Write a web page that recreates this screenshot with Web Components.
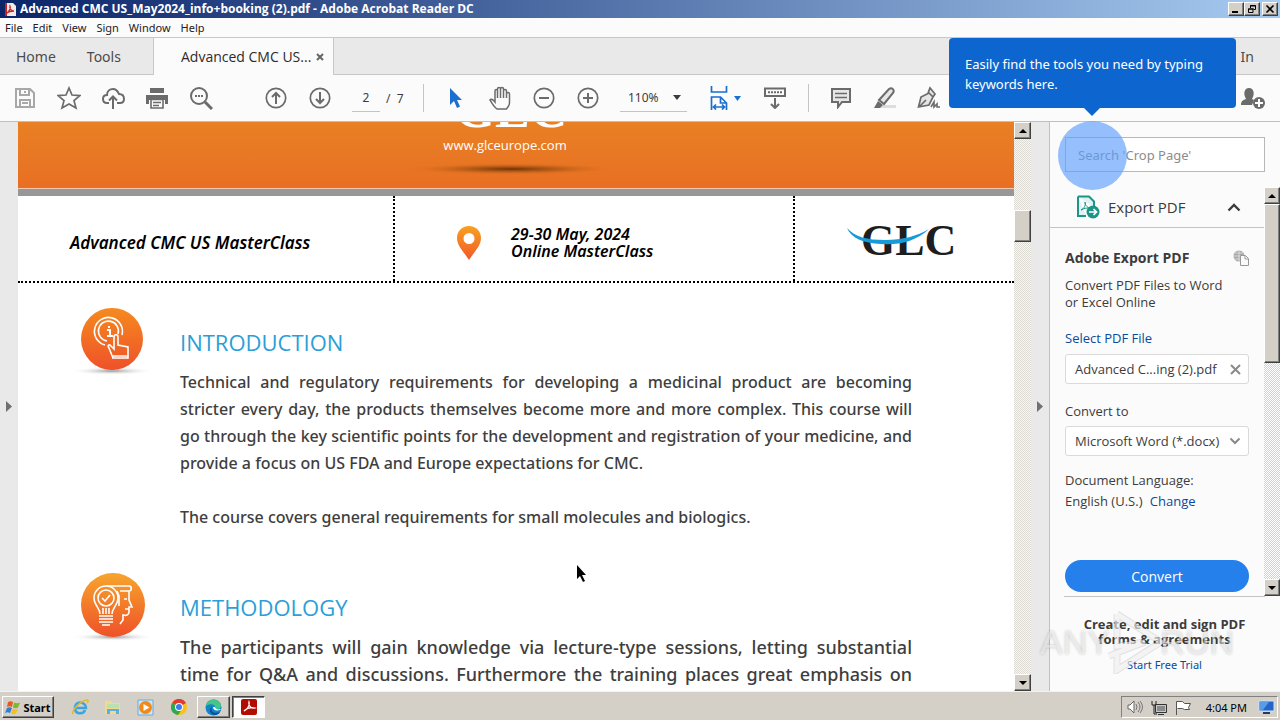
<!DOCTYPE html>
<html lang="en">
<head>
<meta charset="utf-8">
<title>Advanced CMC US_May2024_info+booking (2).pdf - Adobe Acrobat Reader DC</title>
<style>
html, body { margin: 0; height: 100%; }
body { font-family: "Noto Sans", "Open Sans", sans-serif; background: #fbfbfb; color: #3c3c3c; overflow: hidden; }
</style>
</head>
<body>
<reader-app></reader-app>
<script>
const define = (name, html) => {
  const tpl = document.createElement('template');
  tpl.innerHTML = '<style>*{box-sizing:border-box}button,input,select{font:inherit;color:inherit;background:none;border:0;margin:0;padding:0;border-radius:0;outline:0}svg{display:block;flex:none}</style>' + html;
  customElements.define(name, class extends HTMLElement {
    constructor() {
      super();
      this.attachShadow({ mode: 'open' }).append(tpl.content.cloneNode(true));
    }
  });
};

/* Raised classic-theme button; content is slotted */
define('classic-button', `
<style>
:host { display: block; }
button { display: flex; align-items: center; justify-content: center; gap: 2px; width: 100%; height: 100%; background: #d4d0c8;
  border: 1px solid; border-color: #fff #404040 #404040 #fff; box-shadow: inset -1px -1px #808080; color: #000; }
:host([pressed]) button { background: #fff; border-color: #404040 #fff #fff #404040; box-shadow: inset 1px 1px #808080; }
</style>
<button type="button"><slot></slot></button>`);

define('title-bar', `
<style>
:host { display: flex; align-items: center; height: 18px; padding: 0 2px 0 4px; background: linear-gradient(90deg, #0a246a, #a6caf0); color: #fff; }
h1 { flex: 1; margin: 0 0 0 4px; font: bold 12px/18px "Open Sans", "Noto Sans", sans-serif; white-space: nowrap; }
classic-button { width: 16px; height: 14px; }
.close { margin-left: 2px; }
</style>
<svg width="12" height="15" viewBox="0 0 12 15"><path d="M1 1h8l3 3v10H1z" fill="#f3e9e9"/><path d="M1 1h2v13H1z" fill="#c9221e"/><path d="M3 11c2-1 4-5 3-7-1 3 2 5 4 5-2 0-5 0-7 2z" fill="none" stroke="#c9221e" stroke-width="1.3"/></svg>
<h1>Advanced CMC US_May2024_info+booking (2).pdf - Adobe Acrobat Reader DC</h1>
<classic-button><svg width="12" height="10"><path d="M2 8h6" stroke="#000" stroke-width="2"/></svg></classic-button>
<classic-button><svg width="12" height="10"><path d="M4.500 4V1.500h5v4H8M4 2h6M2.500 5h4.500v3.500h-4.500zM2 5h6" fill="none" stroke="#000"/></svg></classic-button>
<classic-button class="close"><svg width="12" height="10"><path d="M2.500 1.500l7 7m0-7l-7 7" stroke="#000" stroke-width="1.600"/></svg></classic-button>`);

define('menu-bar', `
<style>
:host { display: flex; gap: 10px; height: 20px; padding: 0 5px; background: #fbfbfb; border-bottom: 1px solid #c8c8c8; font: 11px/19px "Noto Sans", sans-serif; color: #222; }
</style>
<button>File</button><button>Edit</button><button>View</button><button>Sign</button><button>Window</button><button>Help</button>`);

define('tab-strip', `
<style>
:host { display: flex; height: 37px; background: #e9e9e9; font-size: 14px; color: #4b4b4b; }
.nav, .rest { display: flex; border-bottom: 1px solid #c8c8c8; align-items: center; }
.nav { width: 154px; padding-left: 16px; gap: 31px; border-right: 1px solid #c8c8c8; }
.tab { display: flex; align-items: center; width: 180px; padding: 0 9px 0 27px; justify-content: space-between; background: #fbfbfb; border-right: 1px solid #c8c8c8; color: #2c2c2c; font-family: "Open Sans", sans-serif; }
.rest { flex: 1; justify-content: flex-end; padding-right: 26px; }
</style>
<div class="nav"><button>Home</button><button>Tools</button></div>
<div class="tab"><span>Advanced CMC US...</span><button aria-label="Close tab"><svg width="8" height="8"><path d="M1 1l6 6m0-6L1 7" stroke="#666" stroke-width="2"/></svg></button></div>
<div class="rest"><button>In</button></div>`);

define('tool-button', `
<style>
:host { display: block; width: 44px; flex: none; color: #6b6b6b; }
button { width: 100%; height: 44px; display: flex; align-items: center; justify-content: center; }
</style>
<button type="button"><slot></slot></button>`);

define('tool-bar', `
<style>
:host { display: flex; align-items: center; height: 47px; padding: 0 6px 0 3px; background: #fbfbfb; border-bottom: 1px solid #c0c0c0; font-size: 12px; color: #3c3c3c; }
svg { fill: none; stroke: currentColor; stroke-width: 2; }
.dim { color: #a8a8a8; } .blue { color: #1b6fd0; }
.nav { margin-left: 31px; }
.page { width: 28px; height: 28px; margin-left: 10px; text-align: center; border-bottom: 1px solid #c4c4c4; }
.of { width: 43px; padding-left: 6px; white-space: pre; }
.sep { width: 1px; height: 28px; background: #c4c4c4; margin-right: 10px; }
.zoom { display: flex; align-items: center; width: 67px; height: 28px; margin: 0 10px; border-bottom: 1px solid #c4c4c4; padding: 0 6px 0 8px; }
.zoom select { appearance: none; flex: 1; }
.fit { width: 56px; }
.fit svg + svg { margin-left: 6px; }
.sep2 { margin-left: 11px; }
.user { margin-left: auto; }
</style>
<tool-button class="dim"><svg width="22" height="22" viewBox="0 0 22 22"><path d="M2 2h14l4 4v14H2zM6 2v6h9V2M11 4v2M6 20v-7h10v7M8 16h6"/></svg></tool-button>
<tool-button><svg width="24" height="24" viewBox="0 0 24 24"><path d="M12 2l3 7 8 .600-6 5 2 7.400-7-4-7 4 2-7.400-6-5 8-.600z" stroke-width="1.700"/></svg></tool-button>
<tool-button><svg width="24" height="22" viewBox="0 0 24 22"><path d="M8 16H6c-3 0-4-2-4-4 0-3 2-4 4-4 0-4 3-6 6-6 4 0 5 3 6 5 3 0 5 2 5 5s-2 4-4 4h-3M12 22V10M8 13.500l4-4 4 4"/></svg></tool-button>
<tool-button><svg width="24" height="22" viewBox="0 0 24 22"><path d="M5 1h14v5H5zM1 8h22v9h-3v-4H4v4H1z" fill="currentColor" stroke="none"/><path d="M6 12.500h12V21H6zM8 15.500h8M8 18.500h6" stroke-width="1.600"/></svg></tool-button>
<tool-button><svg width="24" height="24" viewBox="0 0 24 24"><circle cx="10" cy="10" r="8"/><path d="M16 16l7 7" stroke-width="3"/><path d="M6 10h2m1 0h2m1 0h2"/></svg></tool-button>
<tool-button class="nav"><svg width="22" height="22" viewBox="0 0 22 22"><circle cx="11" cy="11" r="9.700" stroke-width="1.700"/><path d="M11 17V6M7 10l4-4 4 4"/></svg></tool-button>
<tool-button><svg width="22" height="22" viewBox="0 0 22 22"><circle cx="11" cy="11" r="9.700" stroke-width="1.700"/><path d="M11 5v11M7 12l4 4 4-4"/></svg></tool-button>
<input class="page" aria-label="Page number" value="2"><span class="of">/  7</span><span class="sep"></span>
<tool-button class="blue"><svg width="14" height="22" viewBox="0 0 14 22"><path d="M1 1v17l4-4 3 7 3-1.500-3-6.500h5z" fill="currentColor" stroke="none"/></svg></tool-button>
<tool-button><svg width="24" height="24" viewBox="0 0 24 24"><path d="M8 23c-3-2-5-6-7-9 1-1.500 3-.500 5 2V5c0-2 2.500-2 2.500 0v7V3c0-2 3-2 3 0v9V3c0-2 3-2 3 0v9-7c0-2 3-2 3 0v7-4c0-2 3-2 3 0v9c0 3-2 4-3 6z" transform="translate(1 0)" stroke-width="1.500"/></svg></tool-button>
<tool-button><svg width="22" height="22" viewBox="0 0 22 22"><circle cx="11" cy="11" r="9.700" stroke-width="1.700"/><path d="M6 11h10"/></svg></tool-button>
<tool-button><svg width="22" height="22" viewBox="0 0 22 22"><circle cx="11" cy="11" r="9.700" stroke-width="1.700"/><path d="M6 11h10M11 6v10"/></svg></tool-button>
<div class="zoom"><select aria-label="Zoom"><option>110%</option></select><svg width="8" height="5"><path d="M0 0h8L4 5z" fill="currentColor" stroke="none"/></svg></div>
<tool-button class="blue fit"><svg width="18" height="24" viewBox="0 0 18 24"><path d="M1.500 0v6h15V0M1.500 24V11h9l6 6v7M10.500 11v6h6M4 21h10M6 18.500L3.500 21 6 23.500M12 18.500l2.500 2.500-2.500 2.500" stroke-width="1.700"/></svg><svg width="7" height="5"><path d="M0 0h7L3.500 5z" fill="currentColor" stroke="none"/></svg></tool-button>
<tool-button><svg width="22" height="22" viewBox="0 0 22 22"><path d="M1 1.500h20v7.500H1z"/><path d="M4 5.200h14" stroke-dasharray="2 1"/><path d="M11 11v10M7 17l4 4 4-4"/></svg></tool-button>
<span class="sep sep2"></span>
<tool-button><svg width="22" height="22" viewBox="0 0 22 22"><path d="M2 2h18v13h-8l-4 5v-5H2z" fill="#e6e6e6"/><path d="M5 6.500h12M5 10.500h12" stroke-width="1.500"/></svg></tool-button>
<tool-button><svg width="24" height="22" viewBox="0 0 24 22"><path d="M10 18h13v3H7z" fill="#ddd" stroke="none"/><path d="M6 13L16 2c3-2 6 1 4 4l-9 11z" fill="#e6e6e6"/><path d="M5 14l5 4-3 3H1z" fill="currentColor" stroke="none"/></svg></tool-button>
<tool-button><svg width="24" height="24" viewBox="0 0 24 24"><path d="M1.500 21L4 11l8-4 4 4-4 8zM2 21l7-7M11 7l2-5 5 6-2 3" fill="#e6e6e6" stroke-width="1.700"/><path d="M14 21l3-5v5l3-3v3h3" stroke-width="1.600"/></svg></tool-button>
<tool-button class="user"><svg width="25" height="24" viewBox="0 0 25 24"><path d="M1 19c0-4 2-5 5-6-3-5-2-11 3-11s6 6 3 11l2 1-2 5z" fill="currentColor" stroke="none"/><circle cx="19" cy="17" r="6" fill="currentColor" stroke="none"/><path d="M15 17h8M19 13v8" stroke="#fff"/></svg></tool-button>`);

/* Classic scroll bar; --before and --thumb set the thumb's place and length */
define('scroll-bar', `
<style>
:host { display: flex; flex-direction: column; width: 17px; flex: none; background: repeating-conic-gradient(#f8f7f3 0 25%, #dcdad2 0 50%) 0 0 / 2px 2px; }
classic-button { height: 17px; flex: none; }
.before { height: var(--before); }
.thumb { height: var(--thumb); margin-bottom: auto; }
</style>
<classic-button><svg width="8" height="4"><path d="M4 0l4 4H0z"/></svg></classic-button>
<span class="before"></span><classic-button class="thumb"></classic-button>
<classic-button><svg width="8" height="4"><path d="M0 0h8L4 4z"/></svg></classic-button>`);

define('pane-handle', `
<style>
:host { display: flex; width: 18px; flex: none; align-items: center; justify-content: center; background: #e9e9e9; }
</style>
<button aria-label="Toggle pane"><svg width="6" height="11"><path d="M0 0l6 5.500L0 11z" fill="#707070"/></svg></button>`);

define('course-section', `
<style>
:host { display: flex; gap: 37px; }
.icon { width: 62px; flex: none; }
.body { flex: 1; padding-top: 20px; min-width: 0; }
h2 { margin: 0 0 13px; font: 22px/28px "Open Sans", sans-serif; color: #2a9fd8; }
</style>
<div class="icon"><slot name="icon"></slot></div>
<div class="body"><h2><slot name="title"></slot></h2><slot></slot></div>`);

define('pdf-page', `
<style>
:host { display: flex; flex-direction: column; flex: 1; min-width: 0; background: #fff; overflow: hidden; }
.banner { height: 66px; flex: none; display: flex; justify-content: center; background: linear-gradient(#e88024, #e96f23); }
.banner svg { width: 240px; margin-right: 10px; }
.rule { height: 8px; flex: none; background: #979797; border-top: 1px solid #f0c8b0; }
.head { display: grid; grid-template-columns: 375fr 400fr 221fr; height: 87px; flex: none; border-bottom: 2px dotted #000; font: italic 600 17px/17px "Noto Sans", sans-serif; color: #000; }
.head > div { display: flex; align-items: center; padding-top: 8px; }
.head > div + div { border-left: 2px dotted #000; }
.head .name { padding-left: 52px; }
.head .date { padding-left: 62px; gap: 30px; font-size: 16px; }
.head .logo { justify-content: center; padding-top: 4px; font-style: normal; }
.logo svg { overflow: visible; }
.head p { margin: 0; white-space: nowrap; }
.sections { display: flex; flex-direction: column; gap: 42px; padding: 25px 102px 0 63px; }
.text { font-weight: 500; font-size: 16px; line-height: 27px; color: #3e3e3e; }
.text p { margin: 0 0 27px; text-align: justify; }
.text p:last-child { margin: 0; }
.text span { display: block; text-align-last: justify; white-space: nowrap; }
.text .end { text-align-last: left; }
.wide { font-size: 18px; }
svg.badge { overflow: visible; }
</style>
<div class="banner"><svg height="66" viewBox="0 0 240 66">
<defs><radialGradient id="s"><stop offset="0" stop-color="#6b3208"/><stop offset=".5" stop-color="#a85414" stop-opacity=".6"/><stop offset="1" stop-color="#e87420" stop-opacity="0"/></radialGradient></defs>
<text x="120" y="5" text-anchor="middle" font-family="Liberation Serif, serif" font-weight="bold" font-size="52" fill="#fff">GLC</text>
<text x="114" y="28" text-anchor="middle" font-family="Open Sans, sans-serif" font-size="13" fill="#fff">www.glceurope.com</text>
<ellipse cx="120" cy="47" rx="105" ry="6" fill="url(#s)"/></svg></div>
<div class="rule"></div>
<div class="head">
<div class="name"><p>Advanced CMC US MasterClass</p></div>
<div class="date"><svg width="24" height="34" viewBox="0 0 24 34"><defs><linearGradient id="p" x2="0" y2="1"><stop stop-color="#f9a11f"/><stop offset="1" stop-color="#f1582a"/></linearGradient></defs><path fill="url(#p)" fill-rule="evenodd" d="M12 0C5 0 0 5 0 12c0 8 7 14 12 22 5-8 12-14 12-22 0-7-5-12-12-12zm0 7a5.500 5.500 0 1 1 0 11 5.500 5.500 0 0 1 0-11z"/></svg><p>29-30 May, 2024<br>Online MasterClass</p></div>
<div class="logo"><svg width="116" height="42" viewBox="0 0 116 42"><text x="14" y="35" font-family="Liberation Serif, serif" font-weight="bold" font-size="44" fill="#1e1e1e">GLC</text><path d="M0 8c8 9 20 12 38 12 18 0 32-4 44-11-14 13-30 16-48 15C16 23 4 18 0 8z" fill="#159bd7"/></svg></div>
</div>
<div class="sections">
<course-section>
<svg class="badge" slot="icon" width="62" height="67" viewBox="0 0 62 67"><defs><linearGradient id="o" x2="0" y2="1"><stop stop-color="#f58a1f"/><stop offset="1" stop-color="#ef5129"/></linearGradient><radialGradient id="g"><stop stop-color="#999"/><stop offset="1" stop-color="#fff" stop-opacity="0"/></radialGradient></defs>
<ellipse cx="31" cy="63" rx="42" ry="4" fill="url(#g)"/><circle cx="31" cy="31" r="31" fill="url(#o)"/>
<g fill="none" stroke="#fff" stroke-width="1.600"><path d="M24 37a14 14 0 1 1 17-10"/><path d="M26 33a10 10 0 1 1 11-7"/><path d="M32 50l-4-10c-2-3 0-4 2-2l3 3V29c0-3 4-3 4 0v8l10 2v11h-16M32 48h15"/><path d="M26 22h3v6m-3 0h6M28 18v2" stroke-width="2"/></g></svg>
<span slot="title">INTRODUCTION</span>
<div class="text"><p><span>Technical and regulatory requirements for developing a medicinal product are becoming</span> <span>stricter every day, the products themselves become more and more complex. This course will</span> <span>go through the key scientific points for the development and registration of your medicine, and</span> <span class="end">provide a focus on US FDA and Europe expectations for CMC.</span></p><p><span class="end">The course covers general requirements for small molecules and biologics.</span></p></div>
</course-section>
<course-section>
<svg class="badge" slot="icon" width="64" height="67" viewBox="-1 0 64 67"><defs><linearGradient id="o2" x2="0" y2="1"><stop stop-color="#f6a52c"/><stop offset="1" stop-color="#ef5129"/></linearGradient></defs>
<ellipse cx="31" cy="64" rx="42" ry="4" fill="url(#g)"/><circle cx="31" cy="32" r="32" fill="url(#o2)"/>
<g fill="none" stroke="#fff" stroke-width="1.600"><path d="M18 41c0-6-6-9-6-16a12 12 0 0 1 24 0c0 7-6 10-6 16"/><circle cx="24" cy="25" r="8"/><path d="M20 25l3 3 5-6"/><path d="M17 43h14M17 46h14M17 49h14M20 52h8M21 41v-6M24 41v-6M27 41v-6"/><path d="M24 13h23c3 0 3 5 0 5h-9M35 18l2 5v10M47 18v9l3 7h-3v5c0 3-3 4-6 3v5l-3 4M42 26h3M43 36h4"/></g></svg>
<span slot="title">METHODOLOGY</span>
<div class="text wide"><p><span>The participants will gain knowledge via lecture-type sessions, letting substantial</span> <span>time for Q&amp;A and discussions. Furthermore the training places great emphasis on</span></p></div>
</course-section>
</div>`);

define('tools-panel', `
<style>
:host { display: flex; flex-direction: column; width: 231px; flex: none; background: #fbfbfb; border-left: 1px solid #c0c0c0; font: 13px "Open Sans", sans-serif; color: #3c3c3c; }
.search { padding: 15px 15px 15px; }
.search input { display: block; width: 100%; height: 35px; border: 1px solid #b8b8b8; padding: 0 12px; font: 13px "Noto Sans", sans-serif; background: #fff; }
input::placeholder { color: #8c8c8c; opacity: 1; }
.area { display: flex; flex: 1; min-height: 0; }
.area > div { flex: 1; min-width: 0; }
scroll-bar { width: 16px; --before: 0px; --thumb: 159px; background: repeating-conic-gradient(#fff 0 25%, #d4d0c8 0 50%) 0 0 / 2px 2px; }
.tool { display: flex; align-items: center; gap: 8px; height: 41px; width: 100%; padding: 0 23px 0 26px; border-bottom: 1px solid #c4c4c4; font-size: 15px; }
.tool span { flex: 1; text-align: left; }
form { display: flex; flex-direction: column; padding: 20px 15px 0; }
h3 { display: flex; justify-content: space-between; align-items: center; margin: 0 0 9px; font: bold 14px/20px "Open Sans", sans-serif; }
p { margin: 0; line-height: 17px; }
a { color: #0a4a9c; text-decoration: none; }
form > a { margin: 19px 0 7px; line-height: 17px; }
.box { display: flex; align-items: center; height: 30px; border: 1px solid #dadada; border-radius: 3px; background: #fff; padding: 0 7px 0 9px; white-space: nowrap; }
.box select { appearance: none; flex: 1; min-width: 0; }
.box span { flex: 1; }
label { margin: 19px 0 6px; line-height: 17px; }
.lang { margin-top: 14px; line-height: 21px; }
.lang a { margin-left: 4px; }
.convert { height: 32px; margin-top: 48px; border-radius: 16px; background: #2680eb; color: #fff; font-size: 14px; }
.promo { height: 95px; margin: 0 15px 0 14px; border-top: 1px solid #c4c4c4; padding-top: 20px; text-align: center; }
.promo b { display: block; line-height: 15px; margin-bottom: 9px; white-space: nowrap; }
.promo a { font: 11px/18px "Noto Sans", sans-serif; display: block; }
</style>
<div class="search"><input type="search" aria-label="Search tools" placeholder="Search 'Crop Page'"></div>
<div class="area"><div>
<button class="tool"><svg width="24" height="24" viewBox="0 0 24 24"><path d="M2 1.500h11l5 5V12M10 21H2V1.500" fill="#ddf3ef" stroke="#1d9488" stroke-width="2"/><path d="M5 15c3-1 5-5 4-8 0 4 3 6 6 6-4 0-7 0-10 2z" fill="none" stroke="#1d9488"/><circle cx="17" cy="17" r="6.500" fill="#1d9488"/><path d="M13 17h7M17.500 14l3 3-3 3" fill="none" stroke="#fff" stroke-width="1.700"/></svg><span>Export PDF</span><svg width="14" height="9"><path d="M1.500 7.500L7 2l5.500 5.500" fill="none" stroke="#3c3c3c" stroke-width="2.400"/></svg></button>
<form>
<h3>Adobe Export PDF<svg width="16" height="16" viewBox="0 0 16 16"><circle cx="6" cy="6" r="5.500" fill="#a8a8a8"/><path d="M0 6h12M6 0v12M2 3h8M2 9h8" stroke="#e4e4e4" stroke-width=".8"/><path d="M7.500 5.500h5l3 3v7h-8z" fill="#fbfbfb" stroke="#999"/><path d="M12 6v3h3" fill="none" stroke="#999"/></svg></h3>
<p>Convert PDF Files to Word<br>or Excel Online</p>
<a href="#select">Select PDF File</a>
<div class="box"><span>Advanced C...ing (2).pdf</span><button type="button" aria-label="Remove file"><svg width="11" height="11"><path d="M1 1l9 9m0-9l-9 9" stroke="#8a8a8a" stroke-width="2"/></svg></button></div>
<label for="format">Convert to</label>
<div class="box"><select id="format"><option>Microsoft Word (*.docx)</option></select><svg width="12" height="8"><path d="M1.500 1.500L6 6l4.500-4.500" fill="none" stroke="#8a8a8a" stroke-width="2"/></svg></div>
<p class="lang">Document Language:<br>English (U.S.) <a href="#lang">Change</a></p>
<button type="button" class="convert">Convert</button>
</form></div>
<scroll-bar></scroll-bar></div>
<div class="promo"><b>Create, edit and sign PDF<br>forms &amp; agreements</b><a href="#trial">Start Free Trial</a></div>`);

define('task-bar', `
<style>
:host { display: flex; align-items: center; height: 29px; padding: 2px 2px 0; background: #d4d0c8; border-top: 1px solid #f4f2ee; color: #000; font: 11px "Noto Sans", sans-serif; }
classic-button { height: 22px; }
.start { width: 52px; font-weight: bold; margin-right: 9px; }
.quick { width: 33px; display: flex; justify-content: center; }
.app { width: 33px; margin-left: 2px; }
.tray { display: flex; align-items: center; gap: 8px; height: 22px; margin-left: auto; padding: 0 2px 0 5px; border: 1px solid; border-color: #808080 #fff #fff #808080; }
time { margin: 0 3px 0 7px; white-space: nowrap; }
</style>
<classic-button class="start"><svg width="16" height="15" viewBox="0 0 16 15"><path d="M3 2c2-1 3-1 5 0L7 7C5 6 4 6 2 7z" fill="#e65a22"/><path d="M9 2.500c2 1 4 1 6 0l-2 5c-2 1-3 1-5 0z" fill="#7ab82c"/><path d="M2 8c2-1 3-1 5 0l-2 5c-2-1-3-1-5 0z" fill="#2f7fd6"/><path d="M8 8.500c2 1 3 1 5 0l-2 5c-2 1-3 1-5 0z" fill="#f5c020"/></svg>Start</classic-button>
<button class="quick" aria-label="Internet Explorer"><svg width="18" height="18" viewBox="0 0 18 18"><path d="M4 10h11c0-7-12-8-11 1 1 6 9 5 10 1" fill="none" stroke="#3aa5e0" stroke-width="2.600"/><path d="M2 16C0 13 10 2 16 2c2 0 1 2 0 3" fill="none" stroke="#e5b92e" stroke-width="1.500"/></svg></button>
<button class="quick" aria-label="Explorer"><svg width="17" height="16" viewBox="0 0 17 16"><path d="M1 2h6l1 2h8v11H1z" fill="#f3d98a"/><path d="M3 5h12v4H3z" fill="#b8e0b0"/><path d="M3 15v-5h12v5h-3v-3H6v3z" fill="#58b0de"/></svg></button>
<button class="quick" aria-label="Media Player"><svg width="17" height="17" viewBox="0 0 17 17"><path d="M1 1h15v15H1z" fill="#cfe6f7" stroke="#6aa8d8"/><circle cx="8.500" cy="8.500" r="6.500" fill="#f08a1c"/><path d="M6.500 5l6 3.500-6 3.500z" fill="#fff"/></svg></button>
<button class="quick" aria-label="Chrome"><svg width="16" height="16" viewBox="0 0 16 16"><circle cx="8" cy="8" r="8" fill="#fbc116"/><path d="M8 8L1 4a8 8 0 0 1 14 0z" fill="#e33b2e"/><path d="M8 8L1 4a8 8 0 0 0 6 12l4-6z" fill="#2da94f"/><circle cx="8" cy="8" r="4" fill="#fff"/><circle cx="8" cy="8" r="3" fill="#3b7ded"/></svg></button>
<classic-button class="app"><svg width="17" height="17" viewBox="0 0 17 17"><circle cx="8.500" cy="8.500" r="8" fill="#1583c9"/><path d="M1 7c1-9 15-8 15 0 0 4-6 4-6 2 1-4-5-5-9-2z" fill="#45c48b"/><path d="M7 8c-2 5 3 7 8 5-1 2-3 3-6 3-4-1-6-6-2-8z" fill="#0b4f9e"/><path d="M8 8c0 3 3 4 7 3l1-1c-3 1-6 0-6-2z" fill="#fff"/></svg></classic-button>
<classic-button class="app" pressed><svg width="16" height="16" viewBox="0 0 16 16"><rect width="16" height="16" rx="2" fill="#b30b00"/><path d="M3 12c3-1 6-6 5-9-1 4 3 7 6 6-4-1-8 0-11 3z" fill="none" stroke="#fff" stroke-width="1.200"/></svg></classic-button>
<div class="tray">
<svg width="16" height="14" viewBox="0 0 16 14"><path d="M1 5h2l4-4v12L3 9H1z" fill="#fff" stroke="#666"/><path d="M9 4q2 3 0 6M11 2q4 5 0 10M13 1q5 6 0 12" fill="none" stroke="#777"/></svg>
<svg width="16" height="15" viewBox="0 0 16 15"><path d="M4.500 4.500h11v8h-11zM7 14.500h6" fill="#c8c8c8" stroke="#333"/><path d="M6 6h8v5H6z" fill="#8b8b8b"/><path d="M1 1v4h4V1M3 5v9h3" fill="none" stroke="#222"/></svg>
<svg width="16" height="15" viewBox="0 0 16 15"><path d="M1.500 15V1.500h6l2 2h6l-2 4 1 2h-5l-2-1h-5" fill="#fff" stroke="#555"/></svg>
<time>4:04 PM</time>
<svg width="17" height="14" viewBox="0 0 17 14"><path d="M1 1h15v10H1z" fill="#2464c8" stroke="#cfe0f5"/><path d="M2 2h9L5 10H2z" fill="#5a9be8"/><path d="M5 12h7v2H5z" fill="#223a66"/></svg>
</div>`);

define('coach-mark', `
<style>
:host { display: block; position: absolute; right: 44px; top: 38px; width: 287px; }
.tip { height: 70px; padding: 16px; border-radius: 4px; background: #0d66d0; color: #fff; font-size: 13px; line-height: 20px; }
.arrow { width: 16px; height: 8px; margin-left: 135px; background: #0d66d0; clip-path: polygon(0 0, 100% 0, 50% 100%); }
.spot { width: 69px; height: 69px; margin: 5px 0 0 109px; border-radius: 50%; background: #5c9efc; opacity: .65; }
</style>
<div class="tip" role="tooltip">Easily find the tools you need by typing keywords here.</div>
<div class="arrow"></div><div class="spot"></div>`);

define('water-mark', `
<style>
:host { display: flex; align-items: center; position: absolute; right: 46px; bottom: 46px; width: 194px; height: 64px; justify-content: space-between; pointer-events: none;
  font: 34px/64px "Liberation Sans", sans-serif; color: rgba(255,255,255,.5); text-shadow: 0 0 3px rgba(0,0,0,.22); }
svg { margin: 0 -20px; }
</style>
<span>ANY</span><svg width="60" height="64" viewBox="0 0 60 64"><path d="M12 4l44 28-44 28V44M12 4v32l28-4L4 46" fill="none" stroke="#000" stroke-opacity=".1" stroke-width="7"/><path d="M12 4l44 28-44 28V44M12 4v32l28-4L4 46" fill="none" stroke="#fff" stroke-opacity=".6" stroke-width="5"/></svg><span>RUN</span>`);

define('reader-app', `
<style>
:host { display: flex; flex-direction: column; height: 100vh; min-width: 1000px; position: relative; overflow: hidden; }
main { display: flex; flex: 1; min-height: 0; }
.doc { --before: 71px; --thumb: 32px; }
.cursor { position: absolute; left: 576px; top: 565px; }
</style>
<title-bar></title-bar><menu-bar></menu-bar><tab-strip></tab-strip><tool-bar></tool-bar>
<main><pane-handle></pane-handle><pdf-page></pdf-page><scroll-bar class="doc"></scroll-bar><pane-handle></pane-handle><tools-panel></tools-panel></main>
<task-bar></task-bar>
<coach-mark></coach-mark><water-mark></water-mark>
<svg class="cursor" width="11" height="18" viewBox="0 0 11 18"><path d="M1 0v14l3-3 3 6 2-1-3-6h4z"/></svg>`);
</script>
</body>
</html>
